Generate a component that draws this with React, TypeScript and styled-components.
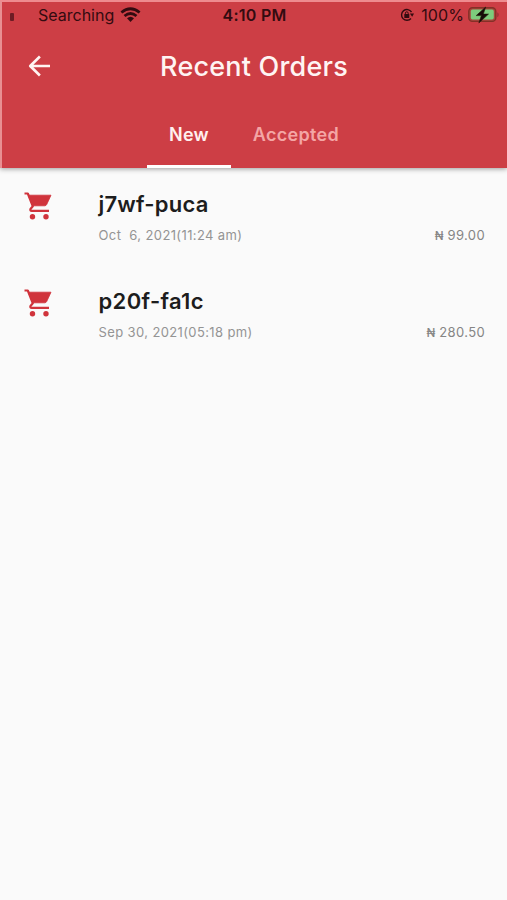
import React from "react";
import styled, { createGlobalStyle } from "styled-components";

const GlobalStyle = createGlobalStyle`
  * { box-sizing: border-box; }
  body { margin: 0; background: #fafafa; }
`;

const Screen = styled.div`
  display: flex;
  flex-direction: column;
  height: 900px;
  width: 507px;
  background: #fafafa;
  font-family: Inter, "Noto Sans", sans-serif;
  overflow: hidden;
`;

const Header = styled.header`
  display: flex;
  flex-direction: column;
  height: 168px;
  flex: none;
  background: #cd3e45;
  border-top: 2px solid #ee8b8f;
  border-left: 2px solid #e88f92;
  box-shadow: 0 1px 5px rgba(0, 0, 0, 0.38);
`;

const StatusBar = styled.div`
  display: grid;
  grid-template-columns: 1fr auto 1fr;
  align-items: center;
  height: 26px;
  padding: 0 8px;
  color: #330b10;
`;

const StatusGroup = styled.div<{ $end?: boolean }>`
  display: flex;
  align-items: center;
  justify-content: ${(p) => (p.$end ? "flex-end" : "flex-start")};
`;

const StatusText = styled.span<{ $bold?: boolean; $spacing?: number }>`
  font-size: 16px;
  line-height: 20px;
  white-space: nowrap;
  font-weight: ${(p) => (p.$bold ? 600 : 400)};
  letter-spacing: ${(p) => p.$spacing ?? 0}px;
`;

const SignalMark = styled.span`
  width: 4px;
  height: 8px;
  margin: 4px 24px 0 0;
  border-radius: 1px;
  background: #6d1c24;
`;

const Icon = styled.svg<{ $left?: number }>`
  display: block;
  flex: none;
  margin-left: ${(p) => p.$left ?? 0}px;
`;

const BatteryLabel = styled(StatusText)`
  margin-left: 7px;
`;

const TitleBar = styled.div`
  display: grid;
  grid-template-columns: 49px 1fr 50px;
  align-items: center;
  height: 77px;
`;

const BackButton = styled.button`
  display: flex;
  padding: 0 0 1px 25px;
  border: 0;
  background: none;
`;

const Title = styled.h1`
  margin: 0;
  text-align: center;
  color: #fff4f3;
  font-size: 27px;
  line-height: 34px;
  font-weight: 500;
  letter-spacing: 0.2px;
`;

const Tabs = styled.nav`
  display: flex;
  height: 63px;
  padding-left: 145px;
`;

const Tab = styled.button<{ $active?: boolean; $width: number }>`
  width: ${(p) => p.$width}px;
  padding: 0;
  border: 0;
  border-bottom: 3px solid ${(p) => (p.$active ? "#fff" : "transparent")};
  background: none;
  color: ${(p) => (p.$active ? "#fff0ef" : "#f4a6a5")};
  font: 600 18px/22px Inter, sans-serif;
  letter-spacing: 0.32px;
`;

const OrderList = styled.main`
  display: flex;
  flex-direction: column;
`;

const OrderRow = styled.article`
  display: grid;
  grid-template-columns: 75px 1fr auto;
  height: 97px;
  padding: 22px 22px 0 23.5px;
`;

const OrderDetails = styled.div`
  display: flex;
  flex-direction: column;
`;

const OrderCode = styled.h2<{ $spacing: number }>`
  margin: 0;
  color: #1d1d1d;
  font-size: 22px;
  line-height: 28px;
  font-weight: 600;
  letter-spacing: ${(p) => p.$spacing}px;
`;

const OrderDate = styled.time`
  margin-top: 8px;
  color: #949494;
  font-size: 13px;
  line-height: 18px;
  letter-spacing: 0.38px;
  white-space: pre;
`;

const Price = styled.span`
  margin-top: 36px;
  color: #858585;
  font-size: 13px;
  line-height: 18px;
  letter-spacing: 0.38px;
`;

const Currency = styled.span`
  display: inline-block;
  width: 8.7px;
  font-size: 11.5px;
  font-weight: 500;
  letter-spacing: 0;
`;

const orders = [
  { code: "j7wf-puca", date: "Oct  6, 2021(11:24 am)", amount: "99.00", spacing: 0.22 },
  { code: "p20f-fa1c", date: "Sep 30, 2021(05:18 pm)", amount: "280.50", spacing: 0.35 },
];

const WifiIcon = () => (
  <Icon $left={6} width="21" height="16" viewBox="0 0 21 16" fill="none" stroke="currentColor" strokeWidth="2.8">
    <path d="M1.4 5.5Q10.5-2 19.6 5.5" />
    <path d="M4.5 9Q10.5 4 16.5 9" />
    <path d="M7 11.2Q10.5 8.2 14 11.2L10.5 15Z" fill="currentColor" stroke="none" />
  </Icon>
);

const RotationLockIcon = () => (
  <Icon width="14" height="14" viewBox="0 0 14 14" fill="none" stroke="currentColor">
    <path d="M11.5 4A5.4 5.4 0 1 0 11 10.5" strokeWidth="1.4" />
    <path d="M9.8 5.5H14l-1.8 3.3z" fill="currentColor" stroke="none" />
    <path d="M5.4 6.7V5.2a1.4 1.4 0 0 1 2.8 0v1.5" strokeWidth="1" />
    <rect x="4.3" y="6" width="5" height="4" rx=".6" fill="currentColor" stroke="none" />
  </Icon>
);

const BatteryIcon = () => (
  <Icon $left={4} width="31" height="18" viewBox="0 0 31 18">
    <rect x=".8" y="1.8" width="27" height="13.6" rx="3.6" fill="#a8483f" stroke="#843027" strokeWidth="1.4" />
    <rect x="2.8" y="3.6" width="23" height="10" rx="1.8" fill="#7dcc7c" />
    <path d="M29 6.2v5q2-.8 2-2.5T29 6.2z" fill="#a4333a" />
    <path d="M17.7 1 8.2 9.6h5.2L10.8 17l9.7-8.9h-5.2z" fill="#160c09" stroke="#25170c" strokeWidth=".6" />
  </Icon>
);

const BackIcon = () => (
  <Icon width="24" height="24" viewBox="0 0 24 24" fill="none" stroke="#fff4f2" strokeWidth="2.6">
    <path d="M12.9 2.5 3.2 12l9.7 9.5M3.2 12H23" strokeLinejoin="round" />
  </Icon>
);

const CartIcon = () => (
  <Icon width="30" height="32" viewBox="0 0.5 30 32" fill="none" stroke="#d0343c">
    <path d="M.5 4h3.3l5 12.8-2.3 2.7q-.7 1.9 1.2 1.9H25" strokeWidth="2.2" strokeLinejoin="round" />
    <path d="M4.5 5.7H27L22.7 15q-.6 1.3-2 1.3H8.6z" fill="#d0343c" strokeWidth=".8" strokeLinejoin="round" />
    <circle cx="8.5" cy="27.3" r="2.7" fill="#d0343c" stroke="none" />
    <circle cx="22" cy="27.3" r="2.7" fill="#d0343c" stroke="none" />
  </Icon>
);

export default function App() {
  return (
    <Screen>
      <GlobalStyle />
      <Header>
        <StatusBar>
          <StatusGroup>
            <SignalMark />
            <StatusText>Searching</StatusText>
            <WifiIcon />
          </StatusGroup>
          <StatusText $bold $spacing={0.25}>4:10 PM</StatusText>
          <StatusGroup $end>
            <RotationLockIcon />
            <BatteryLabel $spacing={0.1}>100%</BatteryLabel>
            <BatteryIcon />
          </StatusGroup>
        </StatusBar>
        <TitleBar>
          <BackButton aria-label="Back">
            <BackIcon />
          </BackButton>
          <Title>Recent Orders</Title>
        </TitleBar>
        <Tabs>
          <Tab $active $width={84}>New</Tab>
          <Tab $width={130}>Accepted</Tab>
        </Tabs>
      </Header>
      <OrderList>
        {orders.map((order) => (
          <OrderRow key={order.code}>
            <CartIcon />
            <OrderDetails>
              <OrderCode $spacing={order.spacing}>{order.code}</OrderCode>
              <OrderDate>{order.date}</OrderDate>
            </OrderDetails>
            <Price>
              <Currency>₦</Currency> {order.amount}
            </Price>
          </OrderRow>
        ))}
      </OrderList>
    </Screen>
  );
}
